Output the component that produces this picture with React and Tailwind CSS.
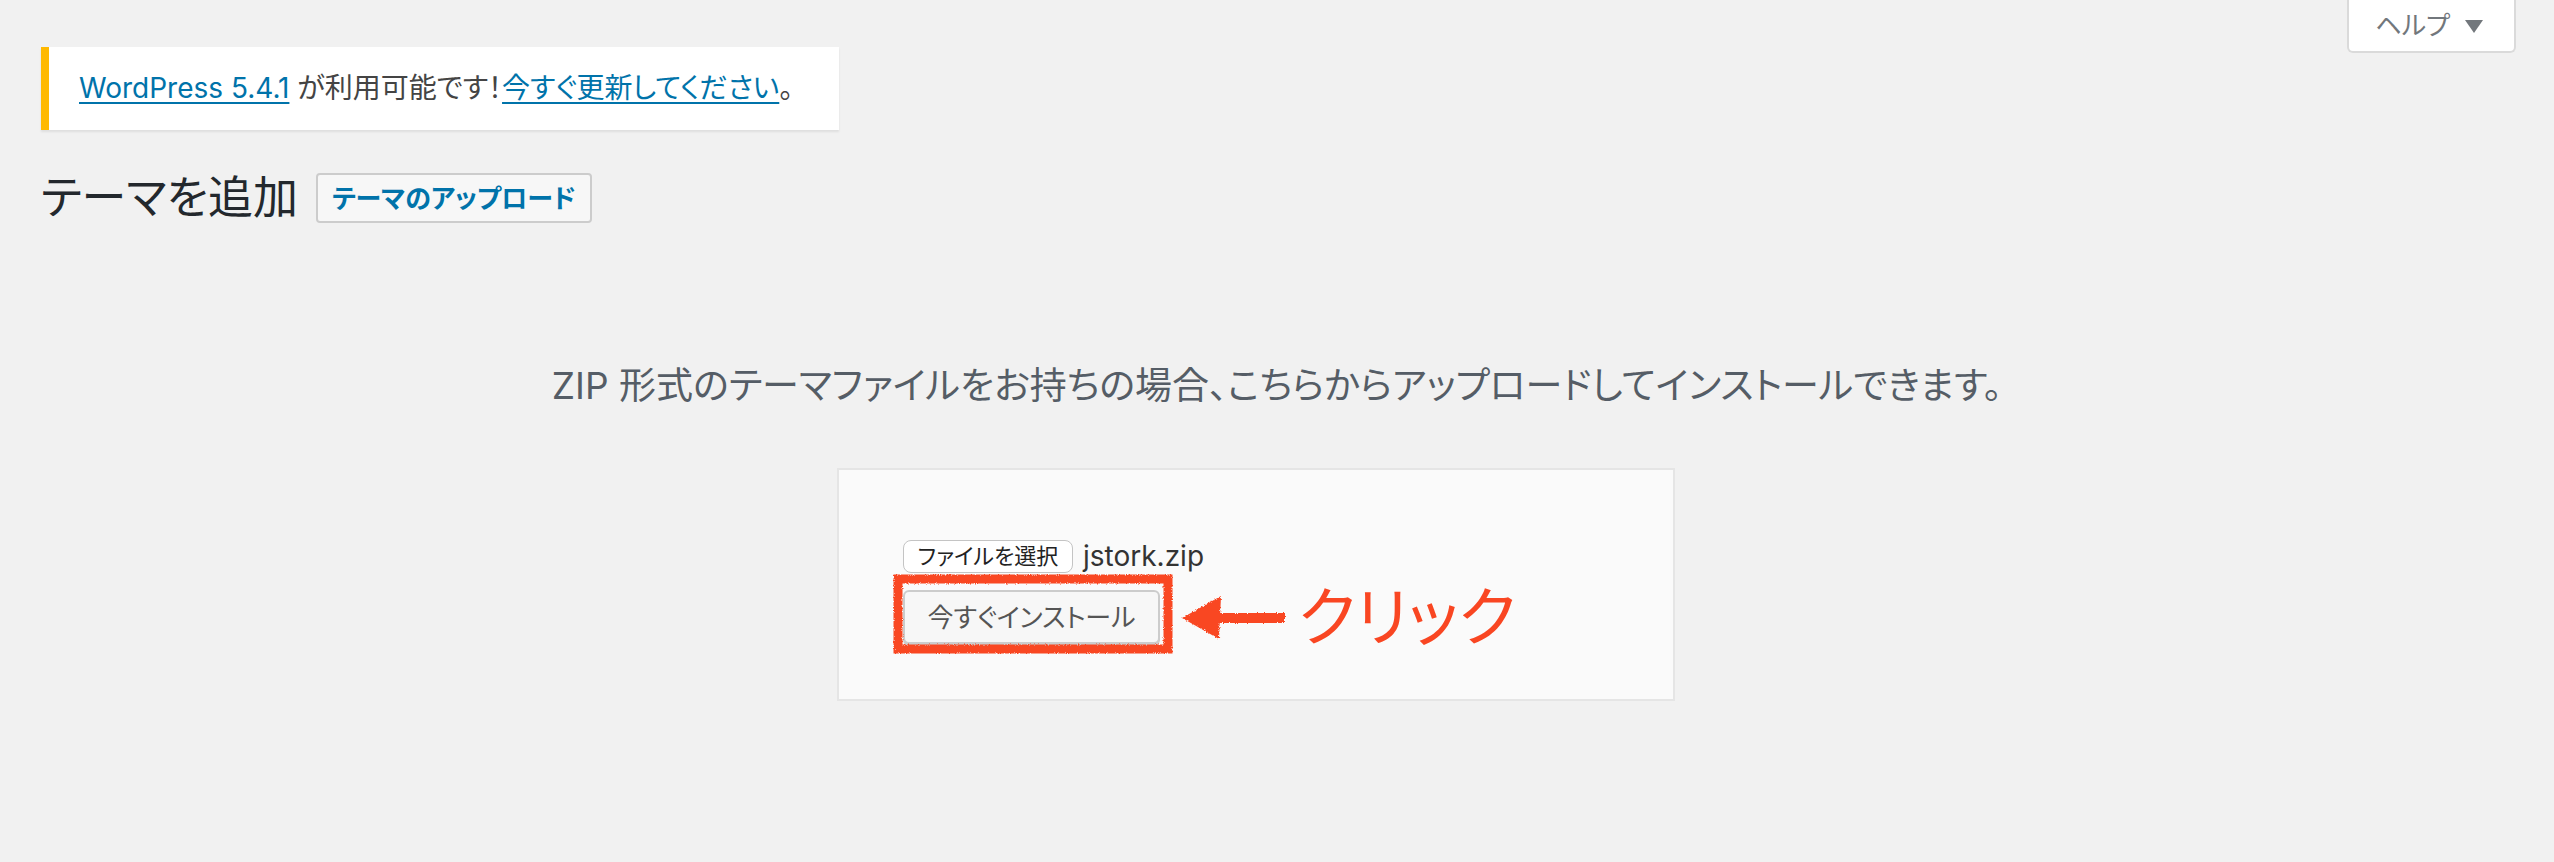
import React from "react";

function RoughFilter() {
  return (
    <svg width="0" height="0" className="absolute">
      <defs>
        <filter id="crayon" x="-10%" y="-10%" width="120%" height="120%">
          <feTurbulence type="fractalNoise" baseFrequency="0.9" numOctaves="2" seed="3" result="noise" />
          <feDisplacementMap in="SourceGraphic" in2="noise" scale="4" xChannelSelector="R" yChannelSelector="G" />
        </filter>
      </defs>
    </svg>
  );
}

export default function App() {
  return (
    <div className="min-h-[862px] w-full bg-[#f1f1f1] font-['Inter','Noto_Sans_CJK_JP',sans-serif] [font-feature-settings:'palt'] text-[#23282d]">
      <RoughFilter />
      {/* top row: notice + help tab */}
      <div className="flex items-start justify-between">
        <div className="ml-[41px] mt-[47px] inline-flex items-center bg-white border-l-[8px] border-[#ffb900] shadow-[0_2px_2px_0_rgba(0,0,0,0.08)] py-[22px] pl-[30px] pr-[46px] text-[28px] leading-[39px] text-[#444]">
          <a className="text-[#0073aa] underline underline-offset-[4px] decoration-[2px]">WordPress 5.4.1</a>
          <span className="ml-[8px]">が利用可能です！</span>
          <a className="text-[#0073aa] underline underline-offset-[4px] decoration-[2px]">今すぐ更新してください</a>
          <span>。</span>
        </div>
        <div className="mr-[38px] flex h-[53px] items-center gap-[14px] rounded-b-[6px] border-2 border-t-0 border-[#dadada] bg-white pl-[26px] pr-[30px] text-[26px] text-[#72777c]">
          <span>ヘルプ</span>
          <svg width="20" height="16" viewBox="0 0 20 16"><path d="M1 2 H19 L10 15 Z" fill="#72777c" /></svg>
        </div>
      </div>

      {/* heading row */}
      <div className="ml-[41px] mt-[38px] flex h-[60px] items-center gap-[18px]">
        <h1 className="text-[45px] font-normal leading-[60px] text-[#23282d]">テーマを追加</h1>
        <button className="h-[50px] rounded-[4px] border-2 border-[#cccccc] bg-[#f7f7f7] px-[14px] text-[26px] font-semibold text-[#0073aa]">
          テーマのアップロード
        </button>
      </div>

      {/* help text */}
      <p className="mt-[133px] text-center text-[37px] leading-[50px] text-[#555d66]">
        ZIP 形式のテーマファイルをお持ちの場合、こちらからアップロードしてインストールできます。
      </p>

      {/* upload form */}
      <div className="ml-[837px] mt-[57px] h-[233px] w-[838px] border-2 border-[#e5e5e5] bg-[#fafafa] pl-[64px] pt-[70px]">
        <div className="flex items-center gap-[10px]">
          <div className="flex h-[33px] w-[170px] items-center justify-center rounded-[8px] border-[1.5px] border-[#c4c4c4] bg-white text-[22px] text-[#222]">
            ファイルを選択
          </div>
          <span className="text-[28px] leading-[33px] text-[#333]">jstork.zip</span>
        </div>
        <div className="mt-[12px] flex items-center">
          <div className="relative">
            <button className="h-[54px] w-[257px] rounded-[6px] border-2 border-[#cccccc] bg-[#f7f7f7] text-[26px] text-[#555] shadow-[0_2px_0_#cccccc]">
              今すぐインストール
            </button>
            <svg className="absolute left-[-10px] top-[-16px]" width="280" height="80" viewBox="0 0 280 80">
              <rect x="5" y="5" width="270" height="70" fill="none" stroke="#f94622" strokeWidth="9" filter="url(#crayon)" />
            </svg>
          </div>
          <svg className="ml-[21px]" width="105" height="47" viewBox="0 0 105 47">
            <g filter="url(#crayon)" fill="#f94622">
              <path d="M1 24 L40 2 L38 45 Z" />
              <rect x="36" y="19" width="68" height="10" />
            </g>
          </svg>
          <span className="ml-[12px] text-[64px] leading-[64px] text-[#f94622]">クリック</span>
        </div>
      </div>
    </div>
  );
}
